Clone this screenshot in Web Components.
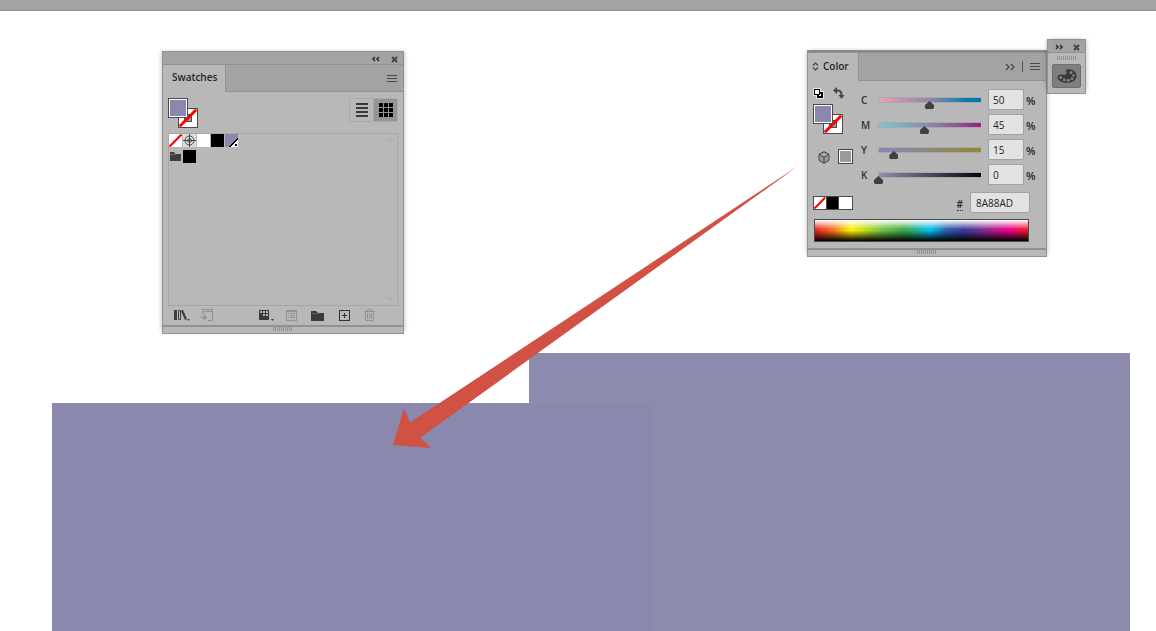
<!DOCTYPE html>
<html lang="en">
<head>
<meta charset="utf-8">
<title>Swatches and Color</title>
<style>
html, body { margin: 0; }
body {
  min-height: 100vh; display: flex; flex-direction: column; background: #fff;
  font: 10px/14px "Open Sans", "Noto Sans", sans-serif; color: #262626;
  --panel: #b8b8b8; --bar: #a3a3a3; --line: #919191; --ink: #3e3e3e; --dim: #9a9a9a;
}
app-workspace { flex: 1; }
/* places on the free canvas */
art-shape, direction-arrow, swatches-panel, color-panel, icon-dock { position: absolute; }
.shape-b { left: 529px; top: 342px; --fill: #8c8aad; }
.shape-a { left: 52px; top: 392px; --fill: #8a88ad; }
direction-arrow { left: 390px; top: 149px; }
swatches-panel { left: 162px; top: 40px; }
color-panel { left: 807px; top: 39px; }
icon-dock { left: 1047px; top: 28px; }
</style>
</head>
<body>
<app-workspace>
  <art-shape class="shape-b"></art-shape>
  <art-shape class="shape-a"></art-shape>
  <swatches-panel></swatches-panel>
  <color-panel></color-panel>
  <icon-dock></icon-dock>
  <direction-arrow></direction-arrow>
</app-workspace>
<script>
const base = `<style>
*,:host{box-sizing:border-box}
svg{display:block}
button{appearance:none;border:0;background:none;padding:0;margin:0;color:var(--ink);font:inherit;display:grid;place-items:center}
</style>`;
function define(name, html, setup) {
  const t = document.createElement('template');
  customElements.define(name, class extends HTMLElement {
    connectedCallback() {
      if (this.shadowRoot) return;
      t.innerHTML = base + (typeof html === 'function' ? html(this) : html);
      this.attachShadow({ mode: 'open' }).append(t.content.cloneNode(true));
      if (setup) setup(this, this.shadowRoot);
    }
  });
}
const menuIcon = `<svg width="10" height="7" viewBox="0 0 10 7" shape-rendering="crispEdges" fill="#4a4a4a"><path d="M0 0h10v1H0zM0 3h10v1H0zM0 6h10v1H0z"/></svg>`;
const closeIcon = `<svg width="7" height="7" viewBox="0 0 7 7"><path d="M1 1l5 5M6 1L1 6" stroke="#444" stroke-width="2"/></svg>`;
const slash = `<svg width="100%" height="100%" viewBox="0 0 12 12" preserveAspectRatio="none"><path d="M0.5 11.5L11.5 .5" stroke="#f00" stroke-width="2"/></svg>`;

define('app-workspace', `<style>
:host{display:flex;flex-direction:column}
header{height:11px;background:var(--bar);border-bottom:1px solid var(--line)}
main{flex:1;position:relative;overflow:hidden;min-height:320px}
</style><header></header><main><slot></slot></main>`);

define('art-shape', `<style>:host{display:block;width:601px;bottom:0;background:var(--fill);border-top:1px solid #8c8aadcc}</style>`);

define('direction-arrow', `<style>:host{display:block;pointer-events:none}</style>
<svg width="410" height="292" viewBox="390 160 410 292"><path fill="#d15245" d="M798 166L410 422.500L404 408.500L393 445L431 448L420.500 437.500Z"/></svg>`);

define('panel-grip', `<style>:host{display:block;width:19px;height:4px;background:repeating-linear-gradient(90deg,#929292 0 1px,transparent 1px 2px)}</style>`);

define('panel-frame', `<style>
:host{display:flex;flex-direction:column;background:var(--panel);border:1px solid var(--line);box-shadow:-3px -1px 4px -2px #0003,3px -1px 4px -2px #0003}
.title{height:13px;background:var(--bar);border-bottom:1px solid var(--line);display:flex;justify-content:flex-end;align-items:center}
.tabs{height:27px;display:flex;background:var(--bar);border-bottom:1px solid var(--line)}
.tab{background:var(--panel);border-right:1px solid var(--line);font-weight:600;margin-bottom:-1px;display:flex;align-items:center;padding:0 8px 3px 9px;gap:4px}
.tools{margin-left:auto;display:flex;align-items:center;gap:6px;padding-right:6px}
footer{border-top:2px solid var(--line);height:8px;display:flex;justify-content:center;padding-right:1px}
.body{flex:1}
:host([docked]) .title{height:2px;background:#868686}
:host([docked]) .tabs{height:28px}
:host([docked]) .tab{padding:0 9px 2px 4px}
</style>
<div class="title"><slot name="title"></slot></div>
<div class="tabs"><div class="tab"><slot name="tab"></slot></div><div class="tools"><slot name="tools"></slot></div></div>
<div class="body"><slot></slot></div>
<footer><panel-grip></panel-grip></footer>`);

define('fill-proxy', `<style>
:host{display:block;position:relative;width:30px;height:30px}
.fill,.stroke{position:absolute;width:20px;height:20px;border:1px solid #4b4b4b}
.fill{left:0;top:0;background:#8a88ad;box-shadow:inset 0 0 0 1px #fff}
.stroke{right:0;bottom:0;background:#fff}
.hole{position:absolute;inset:5px;border:1px solid #4b4b4b;background:var(--dim)}
.stroke svg{position:absolute;inset:0}
</style><button class="stroke" aria-label="Stroke"><span class="hole"></span>${slash}</button><button class="fill" aria-label="Fill"></button>`);

define('swatches-panel', `<style>
:host{display:block}
panel-frame{width:242px;height:283px}
.title{display:flex;gap:11px;padding:2px 5px 0 0}
.content{display:flex;flex-direction:column;height:100%;padding:6px 5px 0}
.head{display:flex;justify-content:space-between;align-items:flex-start;height:35px}
.views{display:flex;border:1px solid #a9a9a9;border-radius:2px}
.views button{width:24px;height:22px}
.views button:first-child{width:23px}
.views .on{background:#949494;border-left:1px solid #a9a9a9}
.list{height:173px;border:1px solid #a7a7a7;display:flex;justify-content:space-between}
.chips{display:grid;grid-template-columns:repeat(5,13px);grid-auto-rows:13px;gap:3px 1px;align-content:start}
.chips button{width:13px;height:13px;background:var(--c,none);overflow:hidden}
.scroll{display:flex;flex-direction:column;justify-content:space-between;padding:3px 3px 4px}
.bar{display:flex;align-items:center;height:18px;padding-left:6px}
.bar button{height:14px}
</style>
<panel-frame>
 <div class="title" slot="title"><button aria-label="Collapse"><svg width="8" height="6" viewBox="0 0 8 6"><path d="M3 1L1 3l2 2M7 1L5 3l2 2" fill="none" stroke="#333" stroke-width="1.600"/></svg></button><button aria-label="Close">${closeIcon}</button></div>
 <span slot="tab">Swatches</span><button slot="tools" aria-label="Panel menu">${menuIcon}</button>
 <div class="content">
  <div class="head"><fill-proxy></fill-proxy>
   <div class="views"><button aria-label="List view"><svg width="12" height="14" viewBox="0 0 12 14" shape-rendering="crispEdges"><path fill="#3a3a3a" d="M0 0h12v2H0zM0 4h12v2H0zM0 8h12v2H0zM0 12h12v2H0z"/></svg></button><button class="on" aria-label="Grid view"><svg width="14" height="14" viewBox="0 0 14 14" shape-rendering="crispEdges"><path fill="#000" d="M0 0h4v4H0zM5 0h4v4H5zM10 0h4v4h-4zM0 5h4v4H0zM5 5h4v4H5zM10 5h4v4h-4zM0 10h4v4H0zM5 10h4v4H5zM10 10h4v4h-4z"/></svg></button></div></div>
  <div class="list">
   <div class="chips">
    <button style="--c:#fff" aria-label="None">${slash}</button>
    <button style="--c:#ddd" aria-label="Registration"><svg width="13" height="13" viewBox="0 0 13 13"><g fill="none" stroke="#333"><circle cx="6.500" cy="6.500" r="4.500" stroke-width=".9"/><circle cx="6.500" cy="6.500" r="2" stroke-width=".7"/><path d="M6.500 0v13M0 6.500h13" stroke-width=".8"/></g></svg></button>
    <button style="--c:#fff" aria-label="White"></button>
    <button style="--c:#000" aria-label="Black"></button>
    <button style="--c:#8a88ad" aria-label="Global purple"><svg width="13" height="13" viewBox="0 0 13 13" shape-rendering="crispEdges"><path fill="#fff" d="M13 5v8H5z"/><path d="M4.500 13L13 4.500" stroke="#000"/><path d="M10 10h2v2h-2z"/></svg></button>
    <button aria-label="Color group"><svg width="11" height="9" viewBox="0 0 11 9"><path fill="#3e3e3e" d="M0 0h4l1.500 2H11v7H0z"/><path d="M0 2.500h6" stroke="#888" stroke-width=".6"/></svg></button>
    <button style="--c:#000" aria-label="Black"></button>
   </div>
   <div class="scroll"><svg width="7" height="5" viewBox="0 0 7 5"><path d="M0 4l3.500-3L7 4" fill="none" stroke="#a6a6a6"/></svg><svg width="7" height="5" viewBox="0 0 7 5"><path d="M0 1l3.500 3L7 1" fill="none" stroke="#a6a6a6"/></svg></div>
  </div>
  <div class="bar">
   <button aria-label="Swatch libraries"><svg width="16" height="14" viewBox="0 0 16 14"><path fill="#3e3e3e" d="M0 2h3v10H0zM7.500 2.500L9 2l4 9-2 1L7 3zM13 11h3l-1.500 2z"/><path d="M4.500 2.500h2v9h-2z" fill="none" stroke="#3e3e3e"/></svg></button>
   <button aria-label="Add to library" style="margin-left:10px"><svg width="14" height="14" viewBox="0 0 14 14" fill="none" stroke="#929292"><path d="M2.500 6V1.500h10M4.500 6V3.500h8v9h-5M12.500 1v3M0 9.500h5"/><path fill="#929292" d="M4 7l3 2.500L4 12z"/></svg></button>
   <button aria-label="Show swatch kinds" style="margin-left:45px"><svg width="16" height="14" viewBox="0 0 16 14"><path fill="#3a3a3a" d="M0 2h10v10H0zM12 11h3l-1.500 2z"/><path fill="#b8b8b8" d="M1 3h2v2H1zM4 3h2v2H4zM7 3h2v2H7zM7 6h2v2H7zM4 6h2v2H4z"/></svg></button>
   <button aria-label="Swatch options" style="margin-left:11px"><svg width="11" height="12" viewBox="0 0 11 12" shape-rendering="crispEdges"><path d="M.5 1.500h10v10H.5zM0 2.500h11" fill="none" stroke="#929292"/><path fill="#929292" d="M2 4h1v1H2zM4 4h5v1H4zM2 6h1v1H2zM4 6h5v1H4zM2 8h1v1H2zM4 8h5v1H4z"/></svg></button>
   <button aria-label="New color group" style="margin-left:14px"><svg width="13" height="11" viewBox="0 0 13 11"><path fill="#3a3a3a" d="M0 1h5l2 2h6v8H0z"/><path d="M1 3.500h7" stroke="#888" stroke-width=".5"/></svg></button>
   <button aria-label="New swatch" style="margin-left:15px"><svg width="11" height="11" viewBox="0 0 11 11" shape-rendering="crispEdges"><path d="M.5.5h10v10H.5zM5.500 3v5M3 5.500h5" fill="none" stroke="#333"/></svg></button>
   <button aria-label="Delete swatch" style="margin-left:14px"><svg width="11" height="12" viewBox="0 0 11 12" fill="none" stroke="#929292"><path d="M0 2.500h11M3.500 2V.5h4V2M1.500 3v8.500h8V3M3.500 4.500v5.500M5.500 4.500v5.500M7.500 4.500v5.500"/></svg></button>
  </div>
 </div>
</panel-frame>`);

define('color-slider', el => { const k = el.getAttribute('channel'), v = el.getAttribute('value'); return `<style>
:host{display:flex;align-items:center;height:25px}
label{width:13px;font-weight:600;color:#333;padding-top:1px}
input{font:inherit;margin:0}
.range{appearance:none;width:111px;height:19px;padding:0;margin:0 3px 0 0;background:linear-gradient(90deg,var(--ramp)) center 8px/calc(100% - 9px) 4px no-repeat,linear-gradient(#a9a9a9,#a9a9a9) center 7px/calc(100% - 8px) 6px no-repeat;outline:0}
.range::-webkit-slider-runnable-track{height:19px}
.range::-webkit-slider-thumb{appearance:none;width:9px;height:8px;margin-top:11px;background:#404040;clip-path:polygon(50% 0,100% 50%,100% 88%,88% 100%,12% 100%,0 88%,0 50%)}
.num{width:36px;height:21px;border:1px solid #a2a2a2;border-radius:2px;background:#e3e3e3;color:#222;padding:0 4px}
span{margin-left:2px;padding-top:2px;font-size:11px;font-weight:600}
</style><label for="r">${k}</label><input id="r" class="range" type="range" value="${v}"><input class="num" aria-label="${k} percent" value="${v}"><span>%</span>`; });

define('color-panel', `<style>
:host{display:block}
panel-frame{width:240px;height:207px}
.content{display:grid;grid-template-columns:48px 1fr;padding:6px 5px 0}
.left{display:flex;flex-direction:column;gap:4px;margin-top:-1px}
.row{display:flex;align-items:center;gap:9px;height:14px}
.row.low{padding:0 0 0 5px;gap:8px;margin-top:9px;height:17px;align-items:flex-end}
.sq{width:15px;height:15px;border:1px solid #444;box-shadow:inset 0 0 0 1px #fff;background:var(--dim)}
.bottom{grid-column:1/-1;display:flex;align-items:center;justify-content:space-between;height:31px;padding-right:11px}
.quick{display:grid;grid-template-columns:repeat(3,1fr);width:40px;height:14px;border:1px solid #4b4b4b;background:#fff}
.quick button{height:12px;border-right:1px solid #4b4b4b;background:#fff}
.quick button:nth-child(2){background:#000}
.quick button:last-child{border:0}
.hex{display:flex;align-items:center;gap:7px;font-weight:600}
.hex label{border-bottom:1px dotted #333;line-height:11px;margin-top:4px}
.hex input{font:inherit;font-weight:400;width:60px;height:21px;border:1px solid #a2a2a2;border-radius:2px;background:#e3e3e3;color:#222;padding:0 5px}
.spectrum{grid-column:1/-1;height:23px;margin:1px 12px 0 1px;border:1px solid #4b4b4b;background:linear-gradient(#fff 0,#fff0 45%,#0000 50%,#000 100%),linear-gradient(90deg,#ed1c24,#f47a20 9%,#fff200 17%,#72bf44 32%,#39a84a 42%,#00bff3 54%,#2e5eab 62%,#3b3a9c 70%,#92278f 81%,#ec008c 91%,#ed1c24)}
.bar{width:1px;height:11px;background:#555}
.tools{display:flex;align-items:center;gap:7px}
</style>
<panel-frame docked>
 <svg slot="tab" width="7" height="9" viewBox="0 0 7 9"><path d="M1 3.500L3.500 1 6 3.500M1 5.500L3.500 8 6 5.500" fill="none" stroke="#444" stroke-width="1.200"/></svg><span slot="tab">Color</span>
 <div slot="tools" class="tools"><button aria-label="Collapse"><svg width="10" height="8" viewBox="0 0 10 8"><path d="M1 1l3 3-3 3M6 1l3 3-3 3" fill="none" stroke="#444" stroke-width="1.200"/></svg></button><span class="bar"></span><button aria-label="Panel menu">${menuIcon}</button></div>
 <div class="content">
  <div class="left">
   <div class="row"><button aria-label="Default fill and stroke"><svg width="11" height="11" viewBox="0 0 11 11" shape-rendering="crispEdges"><path fill="#e4e4e4" d="M0 0h8v3h3v8H3V8H0z"/><path d="M4 4h6v6H4z"/><path fill="#fff" d="M6 6h2v2H6z"/><path d="M1.500 1.500h5v5h-5z" fill="#fff" stroke="#000"/></svg></button>
   <button aria-label="Swap fill and stroke"><svg width="12" height="12" viewBox="0 0 12 12"><path d="M2 3.500h3q3.500 0 3.500 5" fill="none" stroke="#444" stroke-width="2"/><path fill="#444" d="M4 0v7L0 3.500zM5.500 8h6l-3 4z"/></svg></button></div>
   <fill-proxy></fill-proxy>
   <div class="row low"><button aria-label="Web safe color"><svg width="12" height="13" viewBox="0 0 12 13" fill="#999" stroke="#444"><path d="M6 .7l5 2.600v6L6 12.300l-5-3v-6zM1 3.300L6 6l5-2.700M6 6v6"/></svg></button><button class="sq" aria-label="Last color"></button></div>
  </div>
  <div>
   <color-slider channel="C" value="50" style="--ramp:#f0a0ad,#8a88ad 50%,#0079b0 90%"></color-slider>
   <color-slider channel="M" value="45" style="--ramp:#72ccd6,#8a88ad 50%,#98217e"></color-slider>
   <color-slider channel="Y" value="15" style="--ramp:#8585c5,#8a88ad 15%,#94862f"></color-slider>
   <color-slider channel="K" value="0" style="--ramp:#8f8db3,#05050d"></color-slider>
  </div>
  <div class="bottom"><div class="quick"><button aria-label="None">${slash}</button><button aria-label="Black"></button><button aria-label="White"></button></div>
  <div class="hex"><label for="hex">#</label><input id="hex" value="8A88AD"></div></div>
  <div class="spectrum" role="img" aria-label="Color spectrum"></div>
 </div>
</panel-frame>`);

define('icon-dock', `<style>
:host{display:block;width:39px;background:var(--panel);border:1px solid var(--line);box-shadow:-3px -1px 4px -2px #0003,3px -1px 4px -2px #0003}
header{height:13px;background:var(--bar);border-bottom:1px solid var(--line);display:flex;align-items:center;justify-content:flex-end;gap:10px;padding:2px 5px 0 0}
.in{display:flex;flex-direction:column;align-items:center;gap:4px;padding:3px 0 5px}
.pal{width:29px;height:24px;background:#7f7f7f;border:1px solid #6e6e6e;border-radius:2px}
</style><header><button aria-label="Expand"><svg width="8" height="6" viewBox="0 0 8 6"><path d="M1 1l2 2-2 2M5 1l2 2-2 2" fill="none" stroke="#333" stroke-width="1.600"/></svg></button><button aria-label="Close">${closeIcon}</button></header>
<div class="in"><panel-grip></panel-grip><button class="pal" aria-label="Color"><svg width="20" height="14" viewBox="0 0 20 14"><path fill="#393939" d="M10 .5c5-1 9.500 2 9.500 6.500 0 4-4 6.800-9 6.800C5 13.800.5 11.500.5 8.500.5 6 3 5 5.500 5.500c2 .4 4 .3 4.200-1C9.900 3 7.500 2 10 .5z"/><g fill="#858585"><circle cx="14" cy="3.500" r="1.500"/><circle cx="16.500" cy="6.500" r="1.300"/><circle cx="15" cy="9.800" r="1.500"/><circle cx="11.300" cy="11.300" r="1.500"/><circle cx="7.300" cy="10.800" r="1.500"/><circle cx="3.800" cy="8.500" r="1.500"/></g></svg></button></div>`);
</script>
</body>
</html>
